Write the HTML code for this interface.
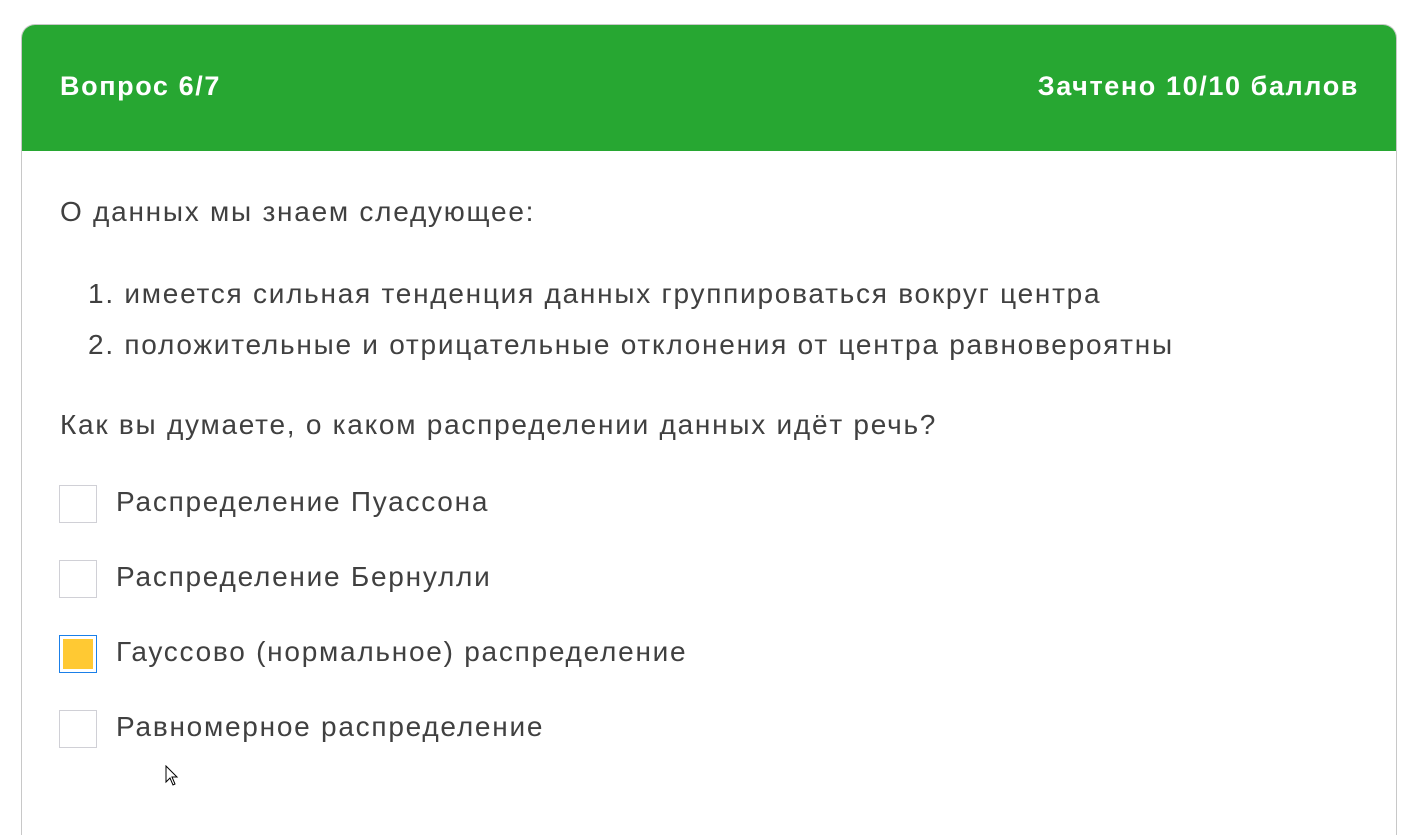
<!DOCTYPE html>
<html><head><meta charset="utf-8"><style>
html,body{margin:0;background:#fff;font-family:"Liberation Sans",sans-serif;overflow:hidden;height:834px;}
.card{position:absolute;left:21px;top:24px;width:1374px;height:810px;border:1px solid #c8c8c8;border-bottom:none;border-radius:14px 14px 0 0;overflow:hidden;}
.hd{height:126px;background:#27a732;color:#fff;font-weight:bold;font-size:27px;letter-spacing:1.6px;position:relative;}
.hd span{position:absolute;top:46px;}
.t{position:absolute;color:#404040;font-size:28px;letter-spacing:1.75px;white-space:nowrap;}
.cb{position:absolute;left:59px;width:36px;height:36px;border:1px solid #d0d0d6;background:#fff;}
.cb.on{border-color:#1a7fe8;}
.cb.on::after{content:"";position:absolute;left:3px;top:3px;width:30px;height:30px;background:#ffc933;}
</style></head><body>
<div class="card"><div class="hd"><span style="left:38px">Вопрос 6/7</span><span style="right:37px">Зачтено 10/10 баллов</span></div></div>
<div class="t" style="left:60px;top:196px">О данных мы знаем следующее:</div>
<div class="t" style="left:88px;top:278px">1. имеется сильная тенденция данных группироваться вокруг центра</div>
<div class="t" style="left:88px;top:329px">2. положительные и отрицательные отклонения от центра равновероятны</div>
<div class="t" style="left:60px;top:409px">Как вы думаете, о каком распределении данных идёт речь?</div>
<div class="cb" style="top:485px"></div><div class="t" style="left:116px;top:486px">Распределение Пуассона</div>
<div class="cb" style="top:560px"></div><div class="t" style="left:116px;top:561px">Распределение Бернулли</div>
<div class="cb on" style="top:635px"></div><div class="t" style="left:116px;top:636px">Гауссово (нормальное) распределение</div>
<div class="cb" style="top:710px"></div><div class="t" style="left:116px;top:711px">Равномерное распределение</div>
<svg style="position:absolute;left:165px;top:765px" width="14" height="22" viewBox="0 0 14 22"><path d="M1 1 L1 17 L5 13 L8 20 L10 19 L7 12 L12 12 Z" fill="#fff" stroke="#000" stroke-width="1"/></svg>
</body></html>
